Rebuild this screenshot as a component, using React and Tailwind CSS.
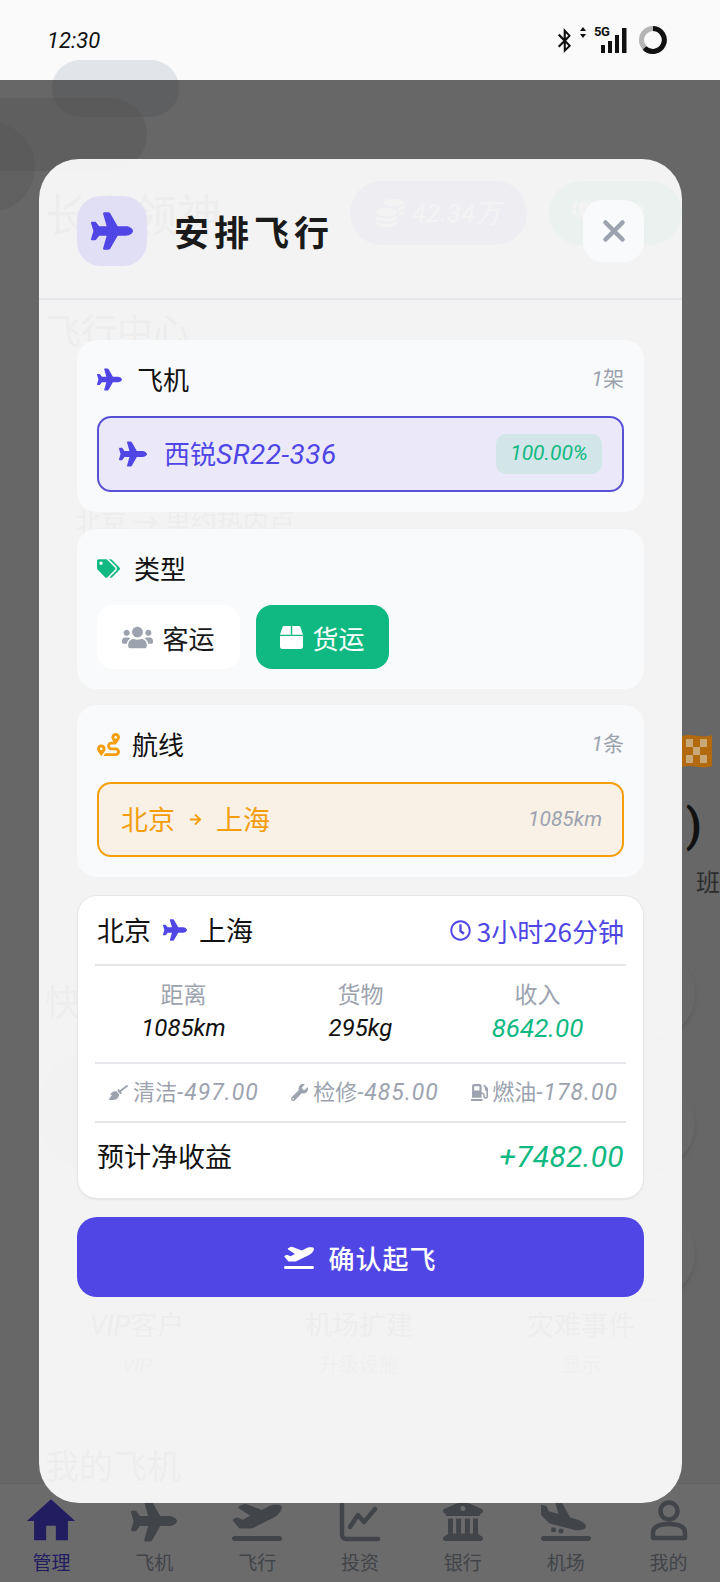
import React from "react";
import { FaTags, FaRoute, FaUsers, FaBox, FaRegClock, FaBroom, FaWrench, FaGasPump, FaArrowRight, FaBluetoothB, FaCoins, FaGem } from "react-icons/fa";
import { FaPlane, FaPlaneDeparture, FaPlaneArrival, FaBuildingColumns } from "react-icons/fa6";
import { MdHome } from "react-icons/md";
import { X } from "lucide-react";

const Num = ({ className = "", children }) => (
  <span className={"italic font-['Roboto'] " + className}>{children}</span>
);

function NavItem({ icon, label, active }) {
  return (
    <div className={"flex flex-col items-center " + (active ? "text-[#4f46e5]" : "text-[#9ca3af]")}>
      <div className="h-[46px] flex items-center justify-center">{icon}</div>
      <span className="text-[19px] leading-[24px] mt-[6px]">{label}</span>
    </div>
  );
}

function ChartIcon() {
  return (
    <svg width="42" height="42" viewBox="0 0 42 42" fill="none" stroke="currentColor" strokeLinecap="round" strokeLinejoin="round">
      <path d="M3 3 V35 a4 4 0 0 0 4 4 H39" strokeWidth="4.5" />
      <path d="M11 27 L19 15 L25 22 L36 9" strokeWidth="4.5" />
    </svg>
  );
}

function PersonIcon() {
  return (
    <svg width="38" height="42" viewBox="0 0 38 42" fill="none" stroke="currentColor" strokeWidth="4.5" strokeLinejoin="round">
      <circle cx="19" cy="11" r="8.5" />
      <path d="M3 38 V33 C3 26 10 24 19 24 S35 26 35 33 V38 Z" />
    </svg>
  );
}

function Background() {
  return (
    <div className="flex flex-col h-full">
      <div className="h-[80px] shrink-0 bg-[#fafafa] pl-[47px] pr-[52px] flex items-center justify-between">
        <Num className="text-[22px] text-[#111]">12:30</Num>
        <div className="flex items-center">
          <FaBluetoothB size={25} className="text-[#111]" />
          <div className="relative w-[52px] h-[30px]">
            <svg width="52" height="30" viewBox="0 0 52 30" className="absolute left-0 top-0">
              <path d="M3 6 L6 2 L9 6 Z M3 9 L9 9 L6 13 Z" fill="#111" />
              <rect x="24" y="20" width="4" height="8" fill="#111" />
              <rect x="31" y="16" width="4" height="12" fill="#111" />
              <rect x="38" y="10" width="4" height="18" fill="#111" />
              <rect x="45" y="3" width="4.5" height="25" fill="#111" />
            </svg>
            <span className="absolute left-[17px] top-[0px] text-[13px] leading-[14px] font-bold tracking-[-0.5px] text-[#111] font-['Roboto']">5G</span>
          </div>
          <svg width="30" height="30" viewBox="0 0 30 30" className="ml-[9px]">
            <circle cx="15" cy="15" r="11.5" fill="none" stroke="#b5b5b5" strokeWidth="5" />
            <path d="M15 3.5 A11.5 11.5 0 1 1 6.5 23" fill="none" stroke="#111" strokeWidth="5" />
          </svg>
        </div>
      </div>
      <div className="flex items-center pl-[45px] pt-[101px] gap-[22px] bg-[#f5f5f5] shrink-0 overflow-hidden">
        <span className="text-[44px] leading-[64px] text-[#444] w-[283px] whitespace-nowrap">长安领神</span>
        <div className="h-[64px] w-[177px] rounded-[32px] bg-[#4f46e5] flex items-center justify-center gap-2 text-[26px] text-white shrink-0">
          <FaCoins size={28} />
          <Num>42.34万</Num>
        </div>
        <div className="h-[64px] w-[133px] rounded-[32px] bg-[#10b981] flex items-center pl-[22px] gap-2 text-[24px] text-white shrink-0">
          <FaGem size={26} />
          <Num>580</Num>
        </div>
      </div>
      <div className="flex-1 bg-[#f5f5f5] flex flex-col min-h-0 overflow-hidden">
        <span className="text-[36px] leading-[48px] text-[#444] pl-[45px] mt-[60px]">飞行中心</span>
        <span className="text-[26px] leading-[32px] text-[#444] pl-[75px] mt-[152px]">北京 → 里约热内卢</span>
        <div className="relative z-20 flex justify-end pr-[8px] mt-[196px] h-[36px]">
          <svg width="30" height="36" viewBox="0 0 30 36">
            <path d="M0 3 C10 0 20 6 30 2 V33 C20 37 10 31 0 34 Z" fill="#b3690e" />
            <g fill="#c9a878">
              <rect x="4" y="6" width="7" height="8" /><rect x="18" y="6" width="7" height="8" />
              <rect x="11" y="14" width="7" height="8" /><rect x="4" y="22" width="7" height="8" /><rect x="18" y="22" width="7" height="8" />
            </g>
          </svg>
        </div>
        <div className="relative z-20 flex flex-col items-end">
          <span className="text-[46px] leading-[50px] font-semibold text-[#111] pr-[18px] mt-[31px] font-['Roboto']">)</span>
          <span className="text-[24px] leading-[30px] text-[#2d2d2d] mt-[16px]">班</span>
        </div>
        <div className="flex px-[45px] mt-[80px]"><span className="text-[36px] text-[#444] leading-[48px]">快捷功能</span></div>
        <div className="ml-[41px] mr-[25px] mt-[31px] flex justify-between shrink-0">
          <div className="w-[120px] h-[112px] rounded-[40px] bg-[#dcdcf0]" />
          <div className="flex flex-col gap-[40px] -mt-[106px]">
            <div className="w-[90px] h-[90px] rounded-full bg-[#f8f8f8] shadow-md" />
            <div className="w-[90px] h-[90px] rounded-full bg-[#f8f8f8] shadow-md" />
            <div className="w-[90px] h-[90px] rounded-full bg-[#f8f8f8] shadow-md" />
          </div>
        </div>
        <div className="grid grid-cols-3 pl-[26px] pr-[28px] text-center text-[#444] text-[27px] leading-[34px] mt-[8px] shrink-0">
          <span><Num>VIP</Num>客户</span><span>机场扩建</span><span>灾难事件</span>
        </div>
        <div className="grid grid-cols-3 pl-[26px] pr-[28px] text-center text-[#888] text-[20px] leading-[28px] mt-[7px] shrink-0">
          <span><Num>VIP</Num></span><span>升级设施</span><span>显示</span>
        </div>
        <span className="text-[34px] text-[#444] leading-[44px] pl-[45px] mt-[64px] shrink-0">我的飞机</span>
      </div>
      <div className="h-[99px] shrink-0 bg-white border-t border-[#e5e7eb] grid grid-cols-7 pt-[14px]">
        <NavItem active label="管理" icon={<MdHome size={58} />} />
        <NavItem label="飞机" icon={<FaPlane size={46} />} />
        <NavItem label="飞行" icon={<FaPlaneDeparture size={50} />} />
        <NavItem label="投资" icon={<ChartIcon />} />
        <NavItem label="银行" icon={<FaBuildingColumns size={40} />} />
        <NavItem label="机场" icon={<FaPlaneArrival size={50} />} />
        <NavItem label="我的" icon={<PersonIcon />} />
      </div>
    </div>
  );
}

function SectionHead({ icon, title, right, gap = "gap-[14px]" }) {
  return (
    <div className="h-[38px] flex items-center justify-between">
      <div className={"flex items-center " + gap}>
        {icon}
        <span className="text-[26px] text-[#111] leading-[38px]">{title}</span>
      </div>
      {right && (
        <span className="text-[21px] text-[#9ca3af]">
          <Num>1</Num>{right}
        </span>
      )}
    </div>
  );
}

function Modal() {
  return (
    <div className="absolute left-[39px] top-[159px] w-[643px] h-[1344px] z-30 rounded-[40px] bg-white/[0.92] flex flex-col">
      <div className="h-[141px] shrink-0 border-b-2 border-[#e5e7eb] px-[38px] pt-[5px] flex items-center justify-between">
        <div className="flex items-center gap-[27px]">
          <div className="w-[70px] h-[70px] rounded-[24px] bg-[#e1dff5] flex items-center justify-center">
            <FaPlane size={42} className="text-[#4f46e5]" />
          </div>
          <span className="text-[35px] font-bold text-[#1a1a1a] tracking-[5px]">安排飞行</span>
        </div>
        <div className="w-[61px] h-[62px] rounded-[20px] bg-[#f9fafb] flex items-center justify-center">
          <X size={34} strokeWidth={3.2} className="text-[#9ca3af]" />
        </div>
      </div>
      <div className="px-[38px] pt-[40px] flex flex-col">
        <div className="rounded-[20px] bg-[#f9fafb] p-[20px] pb-[20px]">
          <SectionHead icon={<FaPlane size={25} className="text-[#4f46e5]" />} title="飞机" right="架" gap="gap-[15px]" />
          <div className="mt-[18px] h-[76px] rounded-[14px] border-2 border-[#5a50d5] bg-[#ebe9f9] flex items-center justify-between pl-[20px] pr-[20px]">
            <div className="flex items-center gap-[17px]">
              <FaPlane size={28} className="text-[#4f46e5]" />
              <span className="text-[26px] text-[#4f46e5]">西锐<Num className="text-[28px] tracking-[0.5px]">SR22-336</Num></span>
            </div>
            <div className="w-[106px] h-[40px] rounded-[10px] bg-[#d2e5e8] flex items-center justify-center">
              <Num className="text-[21px] text-[#10b981]">100.00%</Num>
            </div>
          </div>
        </div>
        <div className="mt-[17px] rounded-[20px] bg-[#f9fafb] p-[20px]">
          <SectionHead icon={<FaTags size={23} className="text-[#10b981]" />} title="类型" />
          <div className="mt-[18px] flex gap-[16px]">
            <div className="w-[143px] h-[64px] rounded-[16px] bg-white flex items-center justify-center gap-[9px]">
              <FaUsers size={31} className="text-[#9ca3af]" />
              <span className="text-[26px] text-[#1a1a1a]">客运</span>
            </div>
            <div className="w-[133px] h-[64px] rounded-[16px] bg-[#10b981] flex items-center justify-center gap-[9px]">
              <FaBox size={23} className="text-white" />
              <span className="text-[26px] text-white">货运</span>
            </div>
          </div>
        </div>
        <div className="mt-[16px] rounded-[20px] bg-[#f9fafb] p-[20px]">
          <SectionHead icon={<FaRoute size={23} className="text-[#f59e0b]" />} title="航线" right="条" gap="gap-[12px]" />
          <div className="mt-[19px] h-[75px] rounded-[14px] border-2 border-[#f59e0b] bg-[#f9f0e6] flex items-center justify-between pl-[22px] pr-[20px]">
            <div className="flex items-center text-[#f59e0b] text-[27px]">
              <span>北京</span>
              <FaArrowRight size={13} className="mx-[14px]" />
              <span>上海</span>
            </div>
            <Num className="text-[21px] text-[#9ca3af]">1085km</Num>
          </div>
        </div>
        <div className="mt-[18px] rounded-[20px] bg-white border border-[#e5e7eb] shadow-[0_1px_2px_rgba(0,0,0,0.06)] h-[304px] px-[17px] flex flex-col">
          <div className="h-[70px] shrink-0 border-b-2 border-[#e5e7eb] flex items-center justify-between px-[2px]">
            <div className="flex items-center text-[27px] text-[#111]">
              <span>北京</span>
              <FaPlane size={24} className="text-[#4f46e5] mx-[12px]" />
              <span>上海</span>
            </div>
            <div className="flex items-center gap-[6px] text-[26px] text-[#4f46e5]">
              <FaRegClock size={21} />
              <span>3小时26分钟</span>
            </div>
          </div>
          <div className="h-[98px] shrink-0 border-b-2 border-[#e5e7eb] grid grid-cols-3 text-center pt-[10px]">
            <div className="flex flex-col">
              <span className="text-[23px] leading-[34px] text-[#9ca3af]">距离</span>
              <Num className="text-[24px] leading-[36px] text-[#111]">1085km</Num>
            </div>
            <div className="flex flex-col">
              <span className="text-[23px] leading-[34px] text-[#9ca3af]">货物</span>
              <Num className="text-[24px] leading-[36px] text-[#111]">295kg</Num>
            </div>
            <div className="flex flex-col">
              <span className="text-[23px] leading-[34px] text-[#9ca3af]">收入</span>
              <Num className="text-[26px] leading-[36px] text-[#10b981]">8642.00</Num>
            </div>
          </div>
          <div className="h-[59px] shrink-0 border-b-2 border-[#e5e7eb] flex justify-between text-[22px] text-[#9ca3af] items-center pl-[14px] pr-[8px] whitespace-nowrap">
            <div className="flex items-center gap-[5px]"><FaBroom size={19} /><span>清洁<Num className="text-[23px] tracking-[1px]">-497.00</Num></span></div>
            <div className="flex items-center gap-[5px]"><FaWrench size={17} /><span>检修<Num className="text-[23px] tracking-[1px]">-485.00</Num></span></div>
            <div className="flex items-center gap-[4px]"><FaGasPump size={17} /><span>燃油<Num className="text-[23px] tracking-[1px]">-178.00</Num></span></div>
          </div>
          <div className="flex-1 flex items-center justify-between pb-[8px] px-[2px]">
            <span className="text-[27px] text-[#111]">预计净收益</span>
            <Num className="text-[30px] tracking-[0.3px] text-[#10b981]">+7482.00</Num>
          </div>
        </div>
        <div className="mt-[18px] h-[80px] rounded-[20px] bg-[#4f46e5] flex items-center justify-center gap-[14px] text-white">
          <FaPlaneDeparture size={30} />
          <span className="text-[26px] font-medium tracking-[1px]">确认起飞</span>
        </div>
      </div>
    </div>
  );
}

export default function App() {
  return (
    <div className="relative w-[720px] h-[1582px] overflow-hidden bg-[#f5f5f5] font-['Noto_Sans_CJK_SC','Noto_Sans',sans-serif]">
      <Background />
      <div className="absolute left-[52px] top-[60px] w-[127px] h-[57px] rounded-[28px] bg-[#d5dae1]/70" />
      <div className="absolute left-[-40px] top-[98px] w-[187px] h-[73px] rounded-[36px] bg-[#c8c8c8]/40" />
      <div className="absolute left-[-70px] top-[122px] w-[105px] h-[90px] rounded-full bg-[#c0c0c0]/30" />
      <div className="absolute left-0 right-0 top-[80px] bottom-0 z-10 bg-black/[0.58]" />
      <Modal />
    </div>
  );
}
